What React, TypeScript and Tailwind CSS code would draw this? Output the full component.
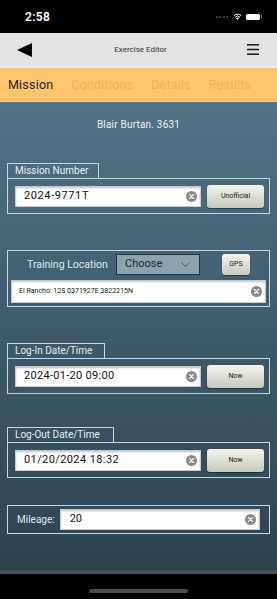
import React from "react";

const F = { fontFamily: "Roboto, 'Noto Sans', sans-serif" };

function ClearIcon({ size = 11 }: { size?: number }) {
  return (
    <svg width={size} height={size} viewBox="0 0 12 12" className="shrink-0">
      <circle cx="6" cy="6" r="6" fill="#8a8a8a" />
      <path d="M4 4 L8 8 M8 4 L4 8" stroke="#ffffff" strokeWidth="1.4" strokeLinecap="round" />
    </svg>
  );
}

function TextInput({ value, className = "", textClass = "" }: { value: string; className?: string; textClass?: string }) {
  return (
    <div
      className={`flex items-center bg-white border border-[#c9c9c9] shadow-[inset_0_1px_2px_rgba(0,0,0,0.25)] pr-[3px] ${className}`}
    >
      <span className={`flex-1 text-[#111] whitespace-nowrap overflow-hidden ${textClass}`}>{value}</span>
      <ClearIcon />
    </div>
  );
}

function Btn({ label, className = "" }: { label: string; className?: string }) {
  return (
    <div
      className={`flex items-center justify-center rounded-[3px] bg-gradient-to-b from-[#f4f4ec] to-[#c6c9bb] shadow-[0_1px_1px_rgba(0,0,0,0.4)] text-[7px] text-[#222] ${className}`}
    >
      {label}
    </div>
  );
}

function Fieldset({ label, tabWidth, children }: { label: string; tabWidth: string; children: React.ReactNode }) {
  return (
    <div className="mx-[7px]">
      <div
        className={`${tabWidth} h-[15px] border border-b-0 border-[#c3d9e4] text-[#e4eef3] text-[10px] leading-[14px] pl-[7px]`}
      >
        {label}
      </div>
      <div className="border border-[#c3d9e4] h-[36px] flex items-center pl-[7px] pr-[5px] gap-[6px]">
        {children}
      </div>
    </div>
  );
}

export default function App() {
  return (
    <div className="w-[277px] h-[599px] flex flex-col overflow-hidden" style={F}>
      {/* status bar */}
      <div className="h-[33px] bg-black flex items-center px-[25px] shrink-0">
        <span className="text-white text-[12px] font-semibold tracking-[0.3px]">2:58</span>
        <div className="flex-1" />
        <div className="flex items-center gap-[1.5px] mr-[5px]">
          <span className="w-[2px] h-[2px] rounded-full bg-[#555]" />
          <span className="w-[2px] h-[2px] rounded-full bg-[#555]" />
          <span className="w-[2px] h-[2px] rounded-full bg-[#555]" />
          <span className="w-[2px] h-[2px] rounded-full bg-[#555]" />
        </div>
        <svg width="9" height="7" viewBox="0 0 18 13" className="mr-[4px]">
          <path d="M9 13 L6 10 A4.2 4.2 0 0 1 12 10 Z" fill="white" />
          <path d="M4 8 A7 7 0 0 1 14 8" stroke="white" strokeWidth="2" fill="none" />
          <path d="M1.5 5 A10.5 10.5 0 0 1 16.5 5" stroke="white" strokeWidth="2" fill="none" />
        </svg>
        <div className="flex items-center mr-[-10px]">
          <div className="w-[14px] h-[6px] rounded-[1.5px] bg-white" />
          <div className="w-[1px] h-[3px] bg-[#888] ml-[1px]" />
        </div>
      </div>

      {/* nav bar */}
      <div className="h-[35px] bg-[#e3e3e3] flex items-center px-[17px] shrink-0 border-b-[2px] border-[#eeeeee] relative">
        <svg width="15" height="14" viewBox="0 0 15 14">
          <path d="M0 7 L15 0 L15 14 Z" fill="#000" />
        </svg>
        <div className="flex-1 text-center text-[8px] text-[#333] ml-[2px]">Exercise Editor</div>
        <svg width="12" height="11" viewBox="0 0 12 11" className="mr-[1px]">
          <rect x="0" y="0" width="12" height="1.6" fill="#222" />
          <rect x="0" y="4.7" width="12" height="1.6" fill="#222" />
          <rect x="0" y="9.4" width="12" height="1.6" fill="#222" />
        </svg>
      </div>

      {/* tab bar */}
      <div className="h-[34px] bg-[#fec56c] flex items-center pl-[8px] gap-[18px] shrink-0 text-[12.5px] tracking-[0.2px]">
        <span className="text-[#1e1e1e]">Mission</span>
        <span className="text-[#eeb25d]">Conditions</span>
        <span className="text-[#eeb25d]">Details</span>
        <span className="text-[#eeb25d]">Results</span>
      </div>

      {/* content */}
      <div className="flex-1 bg-gradient-to-b from-[#517386] to-[#2c4350] flex flex-col">
        <div className="pt-[16px] leading-[14px] text-center text-[10px] text-[#eef3f5] tracking-[0.2px]">
          Blair Burtan. 3631
        </div>

        <div className="mt-[31px]">
          <Fieldset label="Mission Number" tabWidth="w-[92px]">
            <TextInput value="2024-9771T" className="w-[186px] h-[21px]" textClass="pl-[8px] text-[11px] tracking-[0.6px]" />
            <Btn label="Unofficial" className="flex-1 h-[23px]" />
          </Fieldset>
        </div>

        <div className="mt-[36px] mx-[7px] border border-[#c3d9e4] h-[57px] flex flex-col pt-[3px]">
          <div className="flex items-center h-[21px]">
            <span className="ml-[19px] text-[10.5px] text-[#dfe9ee] w-[89px]">Training Location</span>
            <div className="w-[84px] h-[21px] bg-[#8aa3af] border border-[#24343d] flex items-center pl-[8px] pr-[9px]">
              <span className="flex-1 text-[11px] text-[#1b2a33]">Choose</span>
              <svg width="9" height="5" viewBox="0 0 9 5">
                <path d="M0.5 0.5 L4.5 4.5 L8.5 0.5" stroke="#46606c" strokeWidth="1" fill="none" />
              </svg>
            </div>
            <Btn label="GPS" className="ml-[22px] w-[28px] h-[21px]" />
          </div>
          <TextInput
            value="El Rancho: 12S 0371927E 3822215N"
            className="mx-[3px] mt-[5px] h-[23px]"
            textClass="pl-[7px] text-[7px]"
          />
        </div>

        <div className="mt-[36px]">
          <Fieldset label="Log-In Date/Time" tabWidth="w-[98px]">
            <TextInput value="2024-01-20 09:00" className="w-[186px] h-[21px]" textClass="pl-[8px] text-[11px] tracking-[0.3px]" />
            <Btn label="Now" className="flex-1 h-[23px]" />
          </Fieldset>
        </div>

        <div className="mt-[33px]">
          <Fieldset label="Log-Out Date/Time" tabWidth="w-[107px]">
            <TextInput value="01/20/2024 18:32" className="w-[186px] h-[21px]" textClass="pl-[8px] text-[11px] tracking-[0.4px]" />
            <Btn label="Now" className="flex-1 h-[23px]" />
          </Fieldset>
        </div>

        <div className="mt-[27px] mx-[7px] border border-[#c3d9e4] h-[29px] flex items-center pl-[9px] pr-[9px] gap-[5px]">
          <span className="text-[10px] text-[#dfe9ee]">Mileage:</span>
          <TextInput value="20" className="flex-1 h-[21px]" textClass="pl-[9px] text-[11px]" />
        </div>
      </div>

      {/* bottom */}
      <div className="h-[4px] bg-[#4a5358] shrink-0" />
      <div className="h-[25px] bg-black flex items-start justify-center shrink-0 pt-[15px]">
        <div className="w-[99px] h-[4px] rounded-full bg-[#4b4b4b]" />
      </div>
    </div>
  );
}
